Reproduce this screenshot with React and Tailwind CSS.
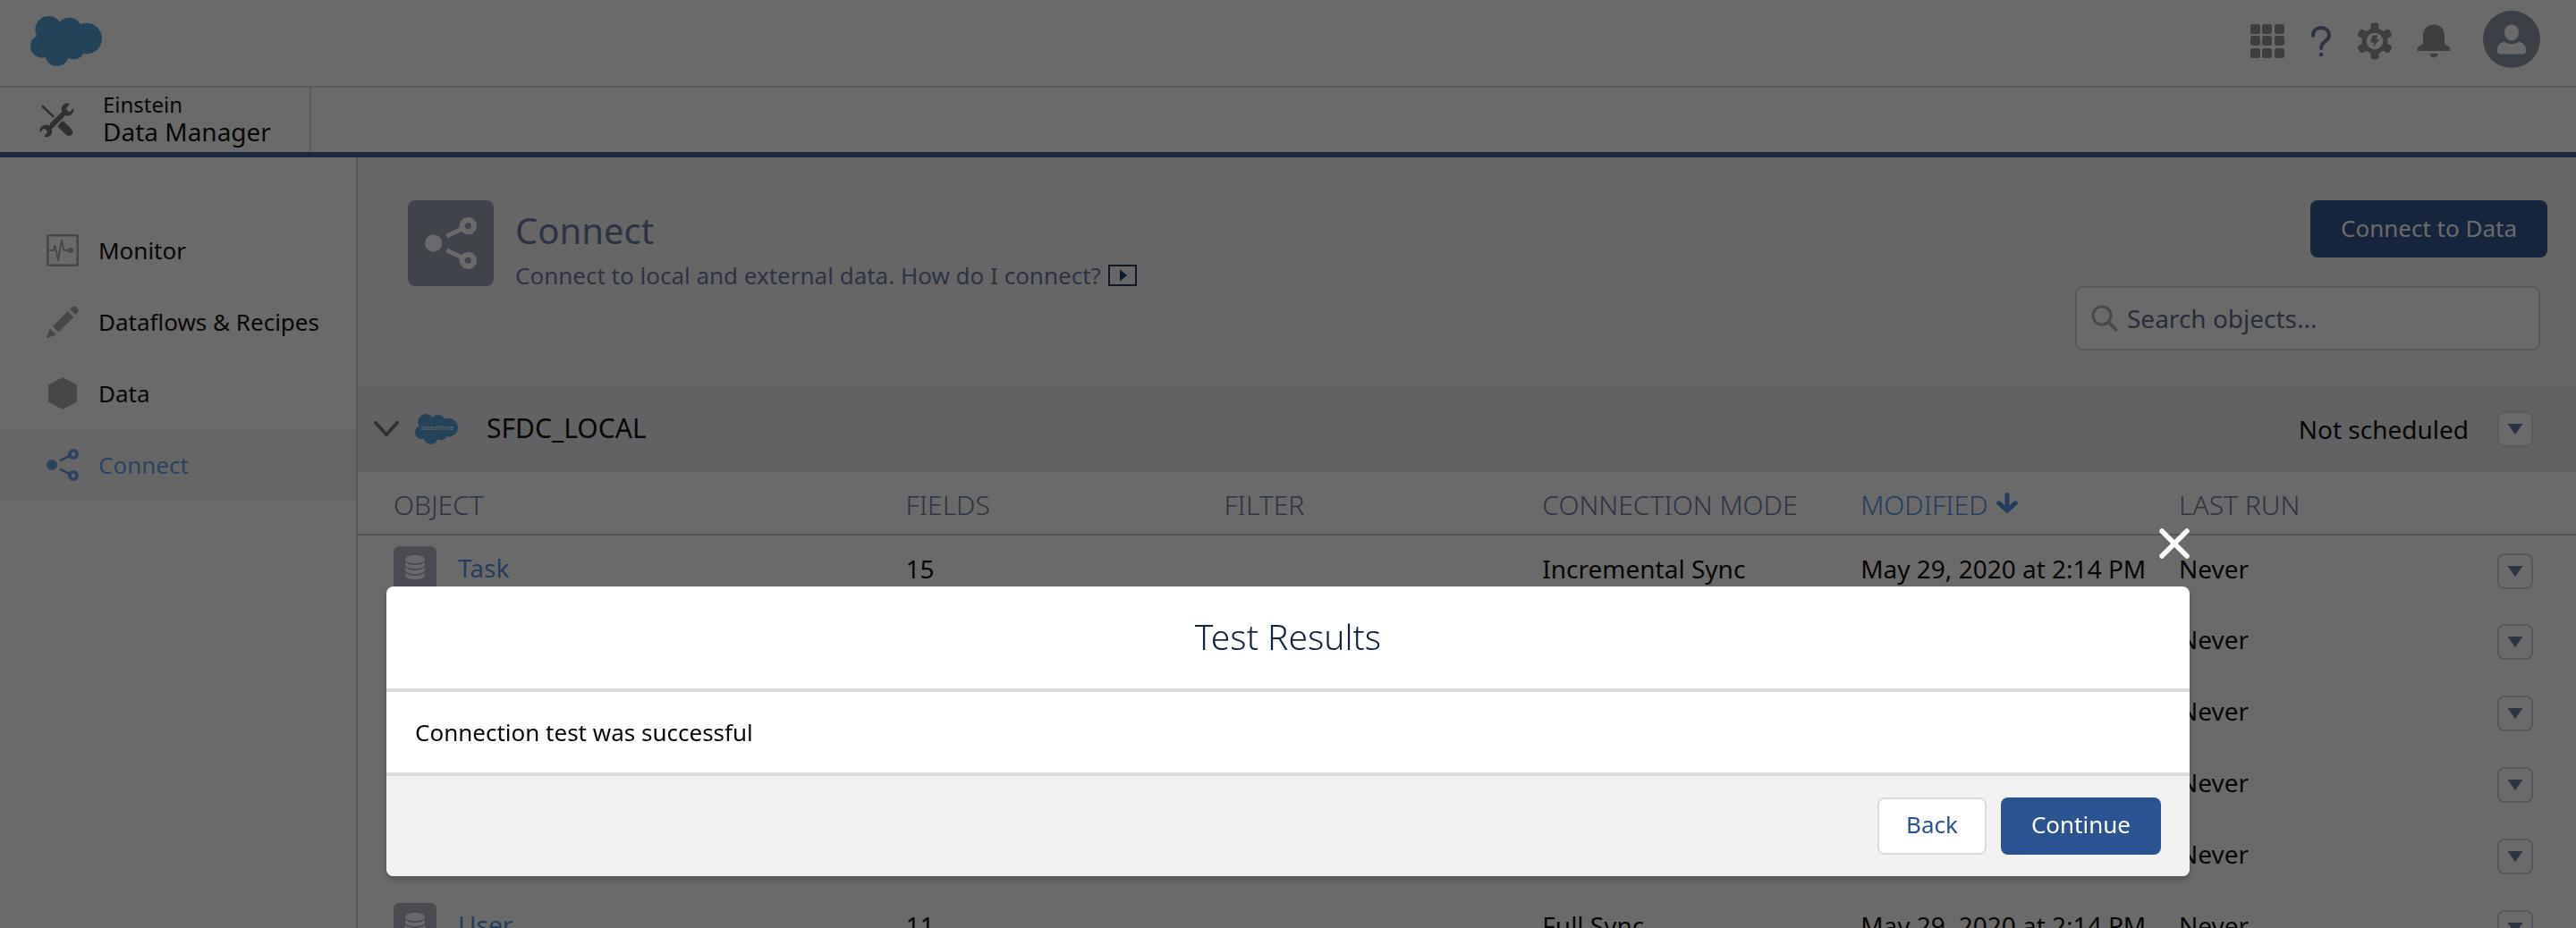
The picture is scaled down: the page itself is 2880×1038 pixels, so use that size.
import React from "react";

function CloudShape() {
  return (
    <g fill="#4b9fd6">
      <circle cx="163" cy="99" r="45" />
      <circle cx="232" cy="101" r="42" />
      <circle cx="290" cy="129" r="52" />
      <circle cx="141" cy="155" r="39" />
      <circle cx="191" cy="181" r="41" />
      <circle cx="248" cy="164" r="35" />
      <path d="M140 110 L200 74 L268 84 L290 140 L260 185 L200 195 L150 180 Z" />
    </g>
  );
}

function Cloud({ className, label }) {
  return (
    <svg viewBox="102 54 240 168" className={className} preserveAspectRatio="none" role="img" aria-label="Salesforce">
      <CloudShape />
      {label && (
        <text x="226" y="144" textAnchor="middle" fontSize="39" fill="#ffffff" fontFamily="Noto Sans">
          salesforce
        </text>
      )}
    </svg>
  );
}

function ToolsIcon() {
  return (
    <svg viewBox="0 0 116 116" className="size-[39px] shrink-0" aria-hidden="true">
      <g stroke="#706e6b" strokeLinecap="round" fill="none">
        <path d="M13 14 L46 45" strokeWidth="8" />
        <path d="M40 74 L84 32" strokeWidth="15" strokeLinecap="butt" />
        <path d="M30 88 L80 38" strokeWidth="15" strokeLinecap="butt" />
      </g>
      <path fill="#706e6b" d="M10 6 L19 14 L12 20 L8 13 Z" />
      <path fill="#706e6b" d="M97 1 C82 -1 71 12 74 25 L89 43 C102 46 116 35 115 20 C114 18 112 19 110 21 L104 28 C101 31 98 30 96 28 L91 23 C89 21 89 18 91 16 L97 9 C100 6 100 2 97 1 Z" />
      <path fill="#706e6b" d="M19 114 C34 117 45 104 42 91 L27 73 C14 70 0 81 1 96 C2 98 4 97 6 95 L12 88 C15 85 18 86 20 88 L25 93 C27 95 27 98 25 100 L19 107 C16 110 16 113 19 114 Z" />
      <path fill="#706e6b" d="M62 76 L73 63 C77 60 80 60 83 63 L107 88 C112 95 112 101 108 106 C103 111 95 111 89 106 L63 82 C61 80 61 78 62 76 Z" />
    </svg>
  );
}

function GridIcon() {
  const steps = [0, 13, 27];
  return (
    <svg viewBox="0 0 38 38" className="size-[38px]" fill="#919191" aria-hidden="true">
      {steps.map((y) => steps.map((x) => <rect key={x + "-" + y} x={x} y={y} width="11" height="11" rx="2.5" />))}
    </svg>
  );
}

function HelpIcon() {
  return (
    <svg viewBox="0 0 22 34" className="h-[34px] w-[22px]" aria-hidden="true">
      <path d="M2 11 C2 5 6 2 11 2 C16 2 20 5.500 20 10.500 C20 17.500 11 17 11 25" fill="none" stroke="#61779d" strokeWidth="4" strokeLinecap="round" />
      <circle cx="11" cy="32" r="2.300" fill="#61779d" />
    </svg>
  );
}

function GearIcon() {
  return (
    <svg viewBox="0 0 38 42" className="h-[42px] w-[38px]" fill="#919191" aria-hidden="true">
      {[0, 60, 120].map((a) => (
        <rect key={a} x="14.500" y="0.500" width="9" height="41" rx="3" transform={"rotate(" + a + " 19 21)"} />
      ))}
      <circle cx="19" cy="21" r="11.800" fill="none" stroke="#919191" strokeWidth="5" />
      <circle cx="19" cy="21" r="9.300" fill="#ffffff" />
      <path d="M16.500 14.500 H22.500 L20.700 19.300 H24.300 L17 28 L18.300 22.600 H14 Z" />
    </svg>
  );
}

function BellIcon() {
  return (
    <svg viewBox="0 0 38 38" className="size-[38px]" fill="#919191" aria-hidden="true">
      <path d="M19 0.500 C11.500 0.500 7 6 7 12.500 V20 C7 22 6 23.500 4.500 24 C2 25 0.500 26 0.500 28.500 C0.500 29.600 1 30 2 30 H36 C37 30 37.500 29.600 37.500 28.500 C37.500 26 36 25 33.500 24 C32 23.500 31 22 31 20 V12.500 C31 6 26.500 0.500 19 0.500 Z" />
      <path d="M14.500 33 H23.500 C23.500 35.500 21.500 37.500 19 37.500 C16.500 37.500 14.500 35.500 14.500 33 Z" />
    </svg>
  );
}

function Avatar() {
  return (
    <svg viewBox="0 0 64 64" className="size-16" aria-hidden="true">
      <circle cx="32" cy="32" r="32" fill="#8797a9" />
      <g fill="#ffffff">
        <ellipse cx="32" cy="24.500" rx="8" ry="9.300" />
        <path d="M24 34.500 C20 36 16 38 16 43 V45 C16 47 17.500 48.500 19.500 48.500 H44.500 C46.500 48.500 48 47 48 45 V43 C48 38 44 36 40 34.500 C37.500 36.500 35 37.200 32 37.200 C29 37.200 26.500 36.500 24 34.500 Z" />
      </g>
    </svg>
  );
}

function MonitorIcon() {
  return (
    <svg viewBox="0 0 36 36" className="size-9" fill="none" stroke="#a8a8a8" aria-hidden="true">
      <rect x="1.300" y="1.300" width="33.400" height="33.400" rx="1.500" strokeWidth="2.600" />
      <path d="M2 18 H8 L9.500 13 L13 29 L17 7 L19.500 18 H25" strokeWidth="2" strokeLinejoin="round" />
      <circle cx="27" cy="18" r="3" fill="#a8a8a8" stroke="none" />
    </svg>
  );
}

function PencilIcon() {
  return (
    <svg viewBox="0 0 36 36" className="size-9" fill="#a8a8a8" aria-hidden="true">
      <path d="M7 23 L23 6.800 C23.700 6.300 24 6.300 24.500 6.800 L29.700 12 C30.100 12.500 30.100 13 29.700 13.400 L13.500 29.500 Z" />
      <path d="M26 4 L29 1 C30.300 -0.200 31.800 0 33 1.200 L35 3.200 C36.200 4.500 36.200 6 35 7.200 L32.300 10 Z" />
      <path d="M4 25.800 L10.800 32.400 L1 36 C0.300 36.200 -0.100 35.800 0.100 35 Z" />
    </svg>
  );
}

function HexagonIcon() {
  return (
    <svg viewBox="0 0 36 36" className="size-9" fill="#a8a8a8" aria-hidden="true">
      <path d="M18 0 L33 8 C34 8.500 34 9 34 9.500 V26.500 C34 27 34 27.500 33 28 L18 36 L3 28 C2 27.500 2 27 2 26.500 V9.500 C2 9 2 8.500 3 8 Z" />
    </svg>
  );
}

function ConnectIcon({ className }) {
  return (
    <svg viewBox="0 0 36 36" className={className} fill="none" stroke="currentColor" aria-hidden="true">
      <circle cx="6" cy="18" r="6" fill="currentColor" stroke="none" />
      <circle cx="30" cy="6" r="4.100" strokeWidth="3.800" />
      <circle cx="30" cy="30" r="4.100" strokeWidth="3.800" />
      <path d="M15 13.200 L26 7.800 M15 22.800 L26 28.200" strokeWidth="3" />
    </svg>
  );
}

function DatabaseIcon() {
  return (
    <span className="flex size-12 shrink-0 items-center justify-center rounded-md bg-[#a8b2c4]">
      <svg viewBox="0 0 22 27" className="h-[27px] w-[22px]" fill="#ffffff" aria-hidden="true">
        <ellipse cx="11" cy="4.500" rx="11" ry="4.500" />
        {[0, 6, 12].map((y) => (
          <path key={y} transform={"translate(0 " + y + ")"} d="M0 7.500 C2 10 7 11 11 11 C15 11 20 10 22 7.500 V10.500 C22 13 17 15 11 15 C5 15 0 13 0 10.500 Z" />
        ))}
      </svg>
    </span>
  );
}

function MenuButton({ label, className }) {
  return (
    <button type="button" aria-label={label} className={"flex size-10 items-center justify-center rounded-lg border-2 " + className}>
      <svg viewBox="0 0 18 12" className="h-3 w-[18px]" fill="#61779d" aria-hidden="true">
        <path d="M0.500 0 H17.500 L9 12 Z" />
      </svg>
    </button>
  );
}

const navItems = [
  { label: "Monitor", icon: <MonitorIcon /> },
  { label: "Dataflows & Recipes", icon: <PencilIcon /> },
  { label: "Data", icon: <HexagonIcon /> },
  { label: "Connect", icon: <ConnectIcon className="size-9" />, active: true },
];

const rows = [
  { object: "Task", fields: "15", mode: "Incremental Sync" },
  { object: "Opportunity", fields: "24", mode: "Incremental Sync" },
  { object: "Lead", fields: "20", mode: "Incremental Sync" },
  { object: "Contact", fields: "18", mode: "Incremental Sync" },
  { object: "Account", fields: "22", mode: "Incremental Sync" },
  { object: "User", fields: "11", mode: "Full Sync" },
];

function TopBar() {
  return (
    <header className="flex h-[98px] shrink-0 items-start justify-between border-b-2 border-[#dddbda] pl-[34px] pr-10">
      <Cloud className="mt-[18px] h-14 w-20" />
      <div className="flex items-center gap-9 pt-3">
        <div className="flex items-center gap-7 pt-1">
          <button type="button" aria-label="App launcher"><GridIcon /></button>
          <button type="button" aria-label="Help" className="px-0.5"><HelpIcon /></button>
          <button type="button" aria-label="Setup"><GearIcon /></button>
          <button type="button" aria-label="Notifications"><BellIcon /></button>
        </div>
        <button type="button" aria-label="Profile"><Avatar /></button>
      </div>
    </header>
  );
}

function AppNav() {
  return (
    <div className="flex h-[78px] shrink-0 border-b-[6px] border-[#355a98]">
      <div className="flex w-[348px] items-center gap-8 border-r-2 border-[#dddbda] pl-11">
        <ToolsIcon />
        <div className="pb-1">
          <p className="text-2xl leading-[30px]">Einstein</p>
          <p className="text-[28px] leading-[30px]">Data Manager</p>
        </div>
      </div>
    </div>
  );
}

function Sidebar() {
  return (
    <nav className="w-[400px] shrink-0 border-r-2 border-[#cbd4dc] pt-16">
      {navItems.map((item) => (
        <a
          key={item.label}
          href="#"
          className={
            "flex h-20 items-center gap-[22px] pl-[52px] text-[26px] " +
            (item.active ? "bg-[#f4f4f8] text-[#5c9de8]" : "")
          }
        >
          {item.icon}
          {item.label}
        </a>
      ))}
    </nav>
  );
}

function PageHeader() {
  return (
    <div className="flex h-64 shrink-0 justify-between bg-[#f4f4f8] pl-14 pr-8 pt-12">
      <div className="flex gap-6">
        <div className="flex size-24 items-center justify-center rounded-lg bg-[#92a1b2] text-white">
          <ConnectIcon className="size-[58px]" />
        </div>
        <div className="text-[#61779d]">
          <h1 className="pt-1 text-[40px] leading-[60px]">Connect</h1>
          <p className="flex items-center gap-2 text-[26px] leading-10">
            Connect to local and external data. How do I connect?
            <a href="#" aria-label="Watch video">
              <svg viewBox="0 0 32 24" className="h-6 w-8" aria-hidden="true">
                <rect x="1" y="1" width="30" height="22" fill="none" stroke="#16325c" strokeWidth="2" />
                <path d="M13 5.500 L21 12 L13 18.500 Z" fill="#16325c" />
              </svg>
            </a>
          </p>
        </div>
      </div>
      <div className="flex flex-col items-end">
        <button type="button" className="h-16 rounded-lg bg-[#2a5391] px-[34px] pb-0.5 text-[26px] text-white">
          Connect to Data
        </button>
        <label className="mr-2 mt-8 flex h-[72px] w-[520px] items-center gap-2.5 rounded-lg border-2 border-[#cbd4dc] bg-white px-4">
          <svg viewBox="0 0 30 30" className="size-[30px] shrink-0" fill="none" stroke="#9faabd" strokeLinecap="round" aria-hidden="true">
            <circle cx="12" cy="12" r="10" strokeWidth="3" />
            <path d="M19.500 19.500 L28 28" strokeWidth="3.500" />
          </svg>
          <input
            type="text"
            aria-label="Search objects"
            placeholder="Search objects..."
            className="min-w-0 flex-1 bg-transparent text-[28px] outline-none placeholder:text-[#54698d]"
          />
        </label>
      </div>
    </div>
  );
}

function ObjectTable() {
  return (
    <table className="w-full table-fixed text-left text-[28px]">
      <thead>
        <tr className="h-[70px] border-b-2 border-[#bccad8] text-[30px] text-[#61779d] *:pt-1">
          <th className="w-[24.7%] pl-10 font-light">OBJECT</th>
          <th className="w-[14.35%] font-light">FIELDS</th>
          <th className="w-[14.35%] font-light">FILTER</th>
          <th className="w-[14.35%] font-light">CONNECTION MODE</th>
          <th className="w-[14.35%] font-light text-[#4a90e2]">
            <button type="button" className="flex items-center gap-2.5">
              MODIFIED
              <svg viewBox="0 0 24 24" className="mb-1 size-6" aria-hidden="true">
                <path d="M12 2.500 V16" stroke="currentColor" strokeWidth="5" strokeLinecap="round" />
                <path d="M0.800 10.200 C2 8.800 3.600 9 5 10.200 L12 16.500 L19 10.200 C20.400 9 22 8.800 23.200 10.200 C24.200 11.500 24 12.500 22.800 13.700 L12 23.500 L1.200 13.700 C0 12.500 -0.200 11.500 0.800 10.200 Z" fill="currentColor" />
              </svg>
            </button>
          </th>
          <th className="font-light">LAST RUN</th>
          <th className="w-[88px]"><span className="sr-only">Actions</span></th>
        </tr>
      </thead>
      <tbody>
        {rows.map((row) => (
          <tr key={row.object} className="h-20">
            <td className="pb-2 pl-10">
              <a href="#" className="flex items-center gap-6 text-[#4a90e2]">
                <DatabaseIcon />
                {row.object}
              </a>
            </td>
            <td className="pb-1.5">{row.fields}</td>
            <td />
            <td className="pb-1.5">{row.mode}</td>
            <td className="whitespace-nowrap pb-1.5">May 29, 2020 at 2:14 PM</td>
            <td className="pb-1.5">Never</td>
            <td><MenuButton label={row.object + " actions"} className="border-[#c9d0da]" /></td>
          </tr>
        ))}
      </tbody>
    </table>
  );
}

function ConnectPage() {
  return (
    <main className="min-w-0 flex-1">
      <PageHeader />
      <section>
        <div className="flex h-24 items-center bg-[#e8ecf0] pl-[18px] pr-12">
          <button type="button" aria-label="Collapse" className="mr-[18px]">
            <svg viewBox="0 0 28 18" className="h-[18px] w-7" aria-hidden="true">
              <path d="M2 2 L14 15 L26 2" fill="none" stroke="#706e6b" strokeWidth="4" strokeLinecap="round" />
            </svg>
          </button>
          <Cloud className="h-[34px] w-12" label />
          <h2 className="ml-8 flex-1 pb-1 text-[30px]">SFDC_LOCAL</h2>
          <p className="mr-8 text-[28px]">Not scheduled</p>
          <MenuButton label="Connection actions" className="border-[#d4d8e4] bg-white" />
        </div>
        <ObjectTable />
      </section>
    </main>
  );
}

function TestResultsDialog() {
  return (
    <div className="fixed inset-0 flex flex-col items-center justify-end bg-[#080707]/60 pb-[58px]">
      <div role="dialog" aria-modal="true" aria-labelledby="dialog-title" className="relative w-[70%] rounded-lg bg-white shadow-[0_4px_6px_rgba(0,0,0,0.2)]">
        <button type="button" aria-label="Close" className="absolute -top-[65px] right-0 text-white">
          <svg viewBox="0 0 34 34" className="size-[34px]" aria-hidden="true">
            <path d="M3 3 L31 31 M31 3 L3 31" stroke="currentColor" strokeWidth="5.500" strokeLinecap="round" />
          </svg>
        </button>
        <div className="flex h-[118px] items-center justify-center border-b-4 border-[#dddbda] pb-0.5">
          <h2 id="dialog-title" className="text-[39px] font-light text-[#10233f]">Test Results</h2>
        </div>
        <p className="flex h-[90px] items-center px-8 text-[26px]">Connection test was successful</p>
        <div className="flex justify-end gap-4 rounded-b-lg border-t-4 border-[#dddbda] bg-[#f1f1f1] px-8 py-6 text-[26px]">
          <button type="button" className="h-16 rounded-lg border-2 border-[#dddbda] bg-white px-[30px] pb-1 text-[#2a5391]">Back</button>
          <button type="button" className="h-16 rounded-lg bg-[#2a5391] px-[34px] pb-1 text-white">Continue</button>
        </div>
      </div>
    </div>
  );
}

export default function App() {
  return (
    <div className="flex h-screen flex-col overflow-hidden bg-white font-['Noto_Sans',sans-serif] text-[#080707]">
      <TopBar />
      <AppNav />
      <div className="flex min-h-0 flex-1">
        <Sidebar />
        <ConnectPage />
      </div>
      <TestResultsDialog />
    </div>
  );
}
